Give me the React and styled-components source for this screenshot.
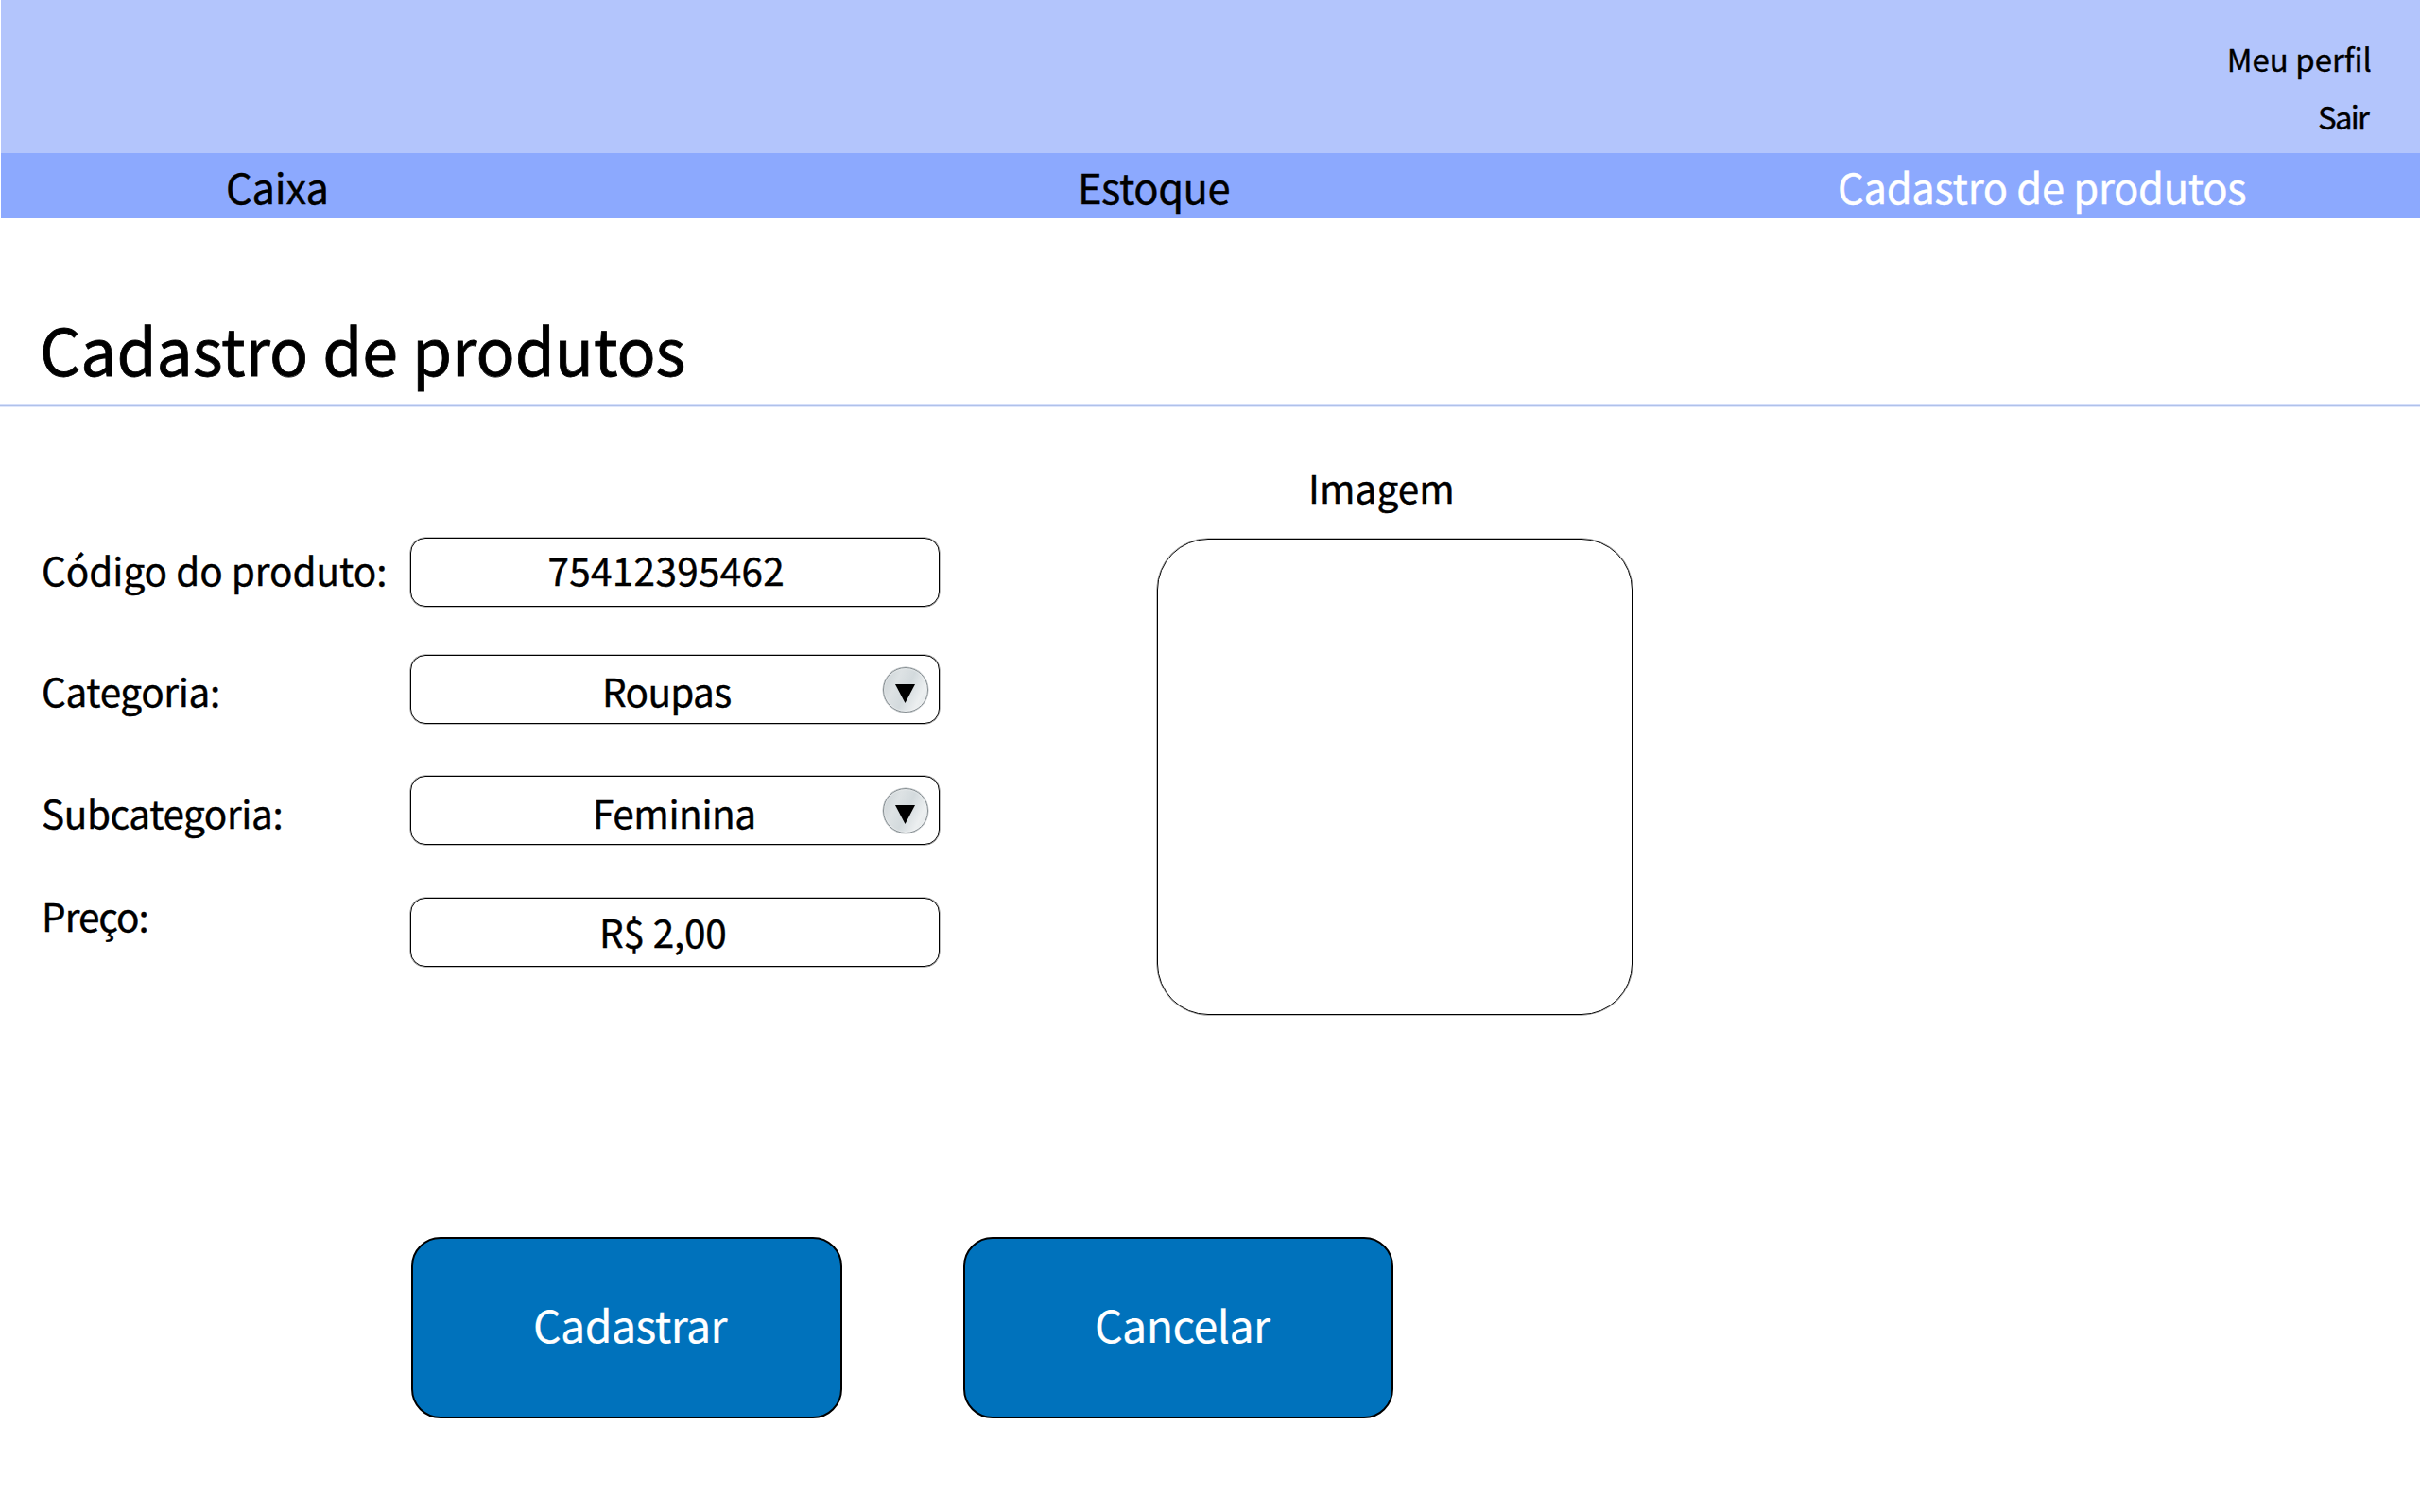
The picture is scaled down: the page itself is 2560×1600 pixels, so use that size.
import React from "react";
import styled, { createGlobalStyle } from "styled-components";

const GlobalStyle = createGlobalStyle`
  *, *::before, *::after { box-sizing: border-box; }
  body {
    margin: 0;
    background: #fff;
    color: #000;
    font-family: "Noto Sans CJK JP", "Noto Sans", sans-serif;
    -webkit-text-stroke: 0.4px currentColor;
  }
`;

const Page = styled.div`
  width: 2560px;
  height: 1600px;
  overflow: hidden;
  background: #fff;
`;

const Header = styled.header`
  display: flex;
  flex-direction: column;
  align-items: flex-end;
  height: 162px;
  margin-left: 1px;
  padding: 32px 51px 0 0;
  background: #b3c5fc;
`;

const UserLink = styled.a`
  font-size: 33px;
  line-height: 61px;
  letter-spacing: ${(p) => p.$tracking || 0}px;
  margin-right: ${(p) => p.$inset || 0}px;
`;

const Nav = styled.nav`
  display: grid;
  grid-template-columns: 901px 804px 1fr;
  height: 69px;
  margin-left: 1px;
  padding: 1px 0 0 238px;
  background: #8ca9fe;
`;

const NavItem = styled.a`
  font-size: 43.5px;
  line-height: 69px;
  letter-spacing: ${(p) => p.$tracking}px;
  color: ${(p) => (p.$active ? "#fff" : "#000")};
`;

const TitleBar = styled.div`
  height: 197px;
  padding: 88px 0 0 42px;
`;

const Title = styled.h1`
  margin: 0;
  font-size: 68px;
  font-weight: 400;
  line-height: 100px;
  letter-spacing: -0.1px;
  -webkit-text-stroke-width: 0.8px;
`;

const Rule = styled.div`
  height: 3px;
  background: #b0c1ea;
  border-top: 1px solid #d5dffa;
  border-bottom: 1px solid #dfe7fc;
`;

const Main = styled.main`
  display: grid;
  grid-template-columns: 1180px 503px;
  padding-left: 44px;
`;

const Form = styled.form`
  display: flex;
  flex-direction: column;
  padding-top: 138px;
`;

const Row = styled.div`
  display: grid;
  grid-template-columns: 390px 560px;
  align-items: start;
  height: 73px;
  margin-bottom: ${(p) => p.$gap || 0}px;
`;

const Label = styled.label`
  margin-top: ${(p) => p.$shift}px;
  font-size: 40.5px;
  line-height: 74px;
  letter-spacing: ${(p) => p.$tracking}px;
`;

const Field = styled.div`
  position: relative;
  height: 73px;
  padding-left: ${(p) => p.$indent}px;
  border: 1px solid #000;
  border-radius: 16px;
  box-shadow: 0 0 0 0.5px rgba(0, 0, 0, 0.5);
`;

const Value = styled.div`
  margin-top: ${(p) => p.$shift}px;
  font-size: 40.5px;
  line-height: 72px;
  letter-spacing: ${(p) => p.$tracking}px;
`;

const Arrow = styled.span`
  position: absolute;
  top: 12px;
  right: 11px;
  width: 48px;
  height: 48px;
  border: 1.5px solid #868e92;
  border-radius: 50%;
  background: linear-gradient(115deg, #c9d0d3 0%, #dde2e4 30%, #d3dadd 52%, #eceff0 78%, #dfe4e6 100%);
  box-shadow: inset 0 0 2px #fff, 0 0 0 0.5px rgba(120, 130, 135, 0.5);

  &::after {
    content: "";
    position: absolute;
    top: 17px;
    left: 12px;
    width: 21px;
    height: 20px;
    background: #000;
    clip-path: polygon(0 0, 100% 0, 50% 100%);
  }
`;

const Picture = styled.section`
  padding-top: 55px;
`;

const Caption = styled.h2`
  margin: 0 0 24px;
  padding-left: 160px;
  font-size: 40.5px;
  font-weight: 400;
  line-height: 60px;
  letter-spacing: 0.1px;
`;

const Frame = styled.div`
  height: 504px;
  border: 1px solid #000;
  border-radius: 54px;
  box-shadow: 0 0 0 0.5px rgba(0, 0, 0, 0.5);
`;

const Actions = styled.div`
  display: flex;
  gap: 128px;
  margin-top: 235px;
  padding-left: 435px;
`;

const Button = styled.button`
  width: ${(p) => p.$width}px;
  height: 192px;
  padding: 0 0 10px ${(p) => p.$indent}px;
  border: 2px solid #000;
  border-radius: 31px;
  background: #0072bc;
  color: #fff;
  font-family: inherit;
  font-size: 46.5px;
  letter-spacing: -0.56px;
  text-align: left;
  -webkit-text-stroke-width: 0.2px;
`;

const fields = [
  { label: "Código do produto:", lShift: -3, lTrack: -0.05, value: "75412395462", indent: 144.5, shift: -3, track: 0.3, gap: 51 },
  { label: "Categoria:", lShift: 1, lTrack: -0.35, value: "Roupas", indent: 202, shift: 1, track: -0.7, gap: 55, select: true },
  { label: "Subcategoria:", lShift: 2, lTrack: -0.4, value: "Feminina", indent: 192, shift: 2, track: -0.43, gap: 56, select: true },
  { label: "Preço:", lShift: -18, lTrack: -1, value: "R$ 2,00", indent: 199, shift: -1, track: -0.2, gap: 1 },
];

export default function App() {
  return (
    <Page>
      <GlobalStyle />
      <Header>
        <UserLink>Meu perfil</UserLink>
        <UserLink $tracking={-1.8} $inset={4}>Sair</UserLink>
      </Header>
      <Nav>
        <NavItem $tracking={-0.25}>Caixa</NavItem>
        <NavItem $tracking={-0.5}>Estoque</NavItem>
        <NavItem $tracking={-0.3} $active>Cadastro de produtos</NavItem>
      </Nav>
      <TitleBar>
        <Title>Cadastro de produtos</Title>
      </TitleBar>
      <Rule />
      <Main>
        <Form>
          {fields.map((f) => (
            <Row key={f.label} $gap={f.gap}>
              <Label $shift={f.lShift} $tracking={f.lTrack}>{f.label}</Label>
              <Field $indent={f.indent}>
                <Value $shift={f.shift} $tracking={f.track}>{f.value}</Value>
                {f.select && <Arrow />}
              </Field>
            </Row>
          ))}
        </Form>
        <Picture>
          <Caption>Imagem</Caption>
          <Frame />
        </Picture>
      </Main>
      <Actions>
        <Button $width={456} $indent={127}>Cadastrar</Button>
        <Button $width={455} $indent={137}>Cancelar</Button>
      </Actions>
    </Page>
  );
}
